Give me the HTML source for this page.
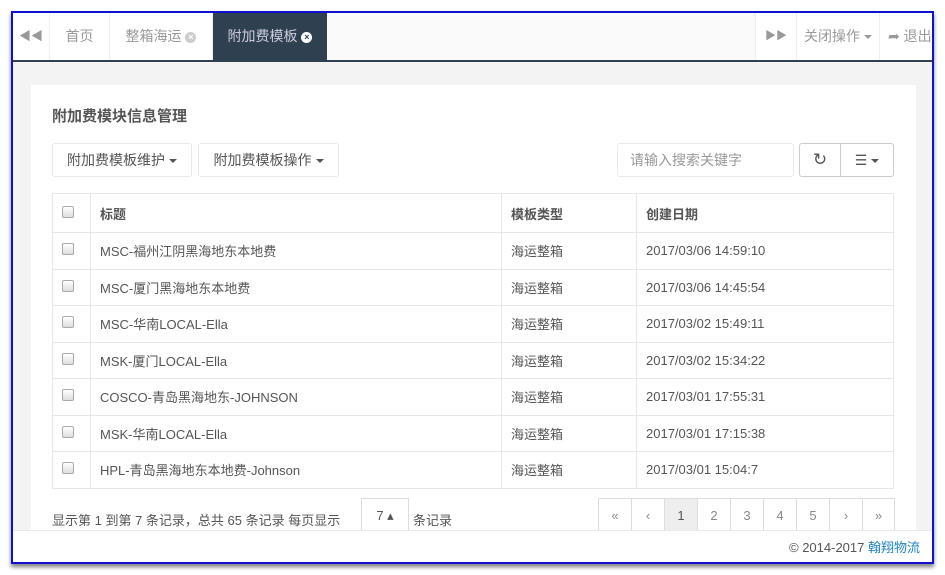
<!DOCTYPE html>
<html><head><meta charset="utf-8"><style>
*{box-sizing:border-box;margin:0;padding:0}
body{width:945px;height:575px;background:#fff;font-family:"Liberation Sans","Noto Sans CJK SC",sans-serif;font-size:13px;color:#676a6c;position:relative;overflow:hidden}
.a{position:absolute}
#frame{left:11px;top:11px;width:923px;height:553px;border:2px solid #1010d0;background:#f3f3f4;box-shadow:0 3px 4px rgba(0,0,0,.5);overflow:hidden}
#bar{left:0;top:0;width:919px;height:49px;background:#fafafa;border-bottom:2px solid #2f4050}
.tab{top:0;height:47px;line-height:47px;text-align:center;border-right:1px solid #eee;background:#fff;color:#999;font-size:14px}
.card{left:18px;top:72px;width:885px;height:460px;background:#fff}
.btn{height:34px;line-height:32px;border:1px solid #e7eaec;border-radius:3px;background:#fff;color:#555;font-size:14px;text-align:center}
.car{display:inline-block;width:0;height:0;border-left:4px solid transparent;border-right:4px solid transparent;border-top:4px solid #555;vertical-align:middle;margin-left:4px}
table{border-collapse:collapse;position:absolute;left:39px;top:180px;width:842px;font-size:13px;color:#555}
td{border:1px solid #e7e7e7;height:36.5px;padding:0 9px}
tr:first-child td{font-weight:bold;height:39px}
.cb{display:inline-block;width:12px;height:12px;border:1px solid #aaa;border-radius:2px;background:linear-gradient(#fff,#ddd)}
.pg{top:485px;height:36px;border:1px solid #ddd;line-height:34px;text-align:center;color:#888;background:#fff;font-size:13px}
.x{display:inline-block;width:11px;height:11px;border-radius:50%;font-size:9px;line-height:11px;text-align:center;vertical-align:middle;font-weight:bold}
</style></head><body>
<div class="a" id="frame">
 <div class="a" id="bar">
  <div class="a tab" style="left:0;width:37px;font-size:12px">◀◀</div>
  <div class="a tab" style="left:37px;width:60px">首页</div>
  <div class="a tab" style="left:97px;width:103px">整箱海运 <span class="x" style="background:#ccc;color:#fff">×</span></div>
  <div class="a tab" style="left:200px;width:114px;background:#2f4050;color:#ccd;border:0">附加费模板 <span class="x" style="background:#fff;color:#2f4050">×</span></div>
  <div class="a tab" style="left:742px;width:42px;border-left:1px solid #eee;font-size:11px">▶▶</div>
  <div class="a tab" style="left:784px;width:83px">关闭操作<span class="car" style="border-top-color:#999"></span></div>
  <div class="a tab" style="left:867px;width:60px;text-align:left;padding-left:8px">➦ 退出</div>
 </div>
 <div class="a card">
  <div class="a" style="left:21px;top:20px;font-size:15px;font-weight:bold;color:#555">附加费模块信息管理</div>
  <div class="a btn" style="left:21px;top:58px;width:140px">附加费模板维护<span class="car"></span></div>
  <div class="a btn" style="left:167px;top:58px;width:141px">附加费模板操作<span class="car"></span></div>
  <div class="a btn" style="left:586px;top:58px;width:177px;text-align:left;padding-left:12px;color:#999">请输入搜索关键字</div>
  <div class="a btn" style="left:768px;top:58px;width:42px;border-color:#ccc;font-size:17px;border-radius:3px 0 0 3px">↻</div>
  <div class="a btn" style="left:809px;top:58px;width:54px;border-color:#ccc;border-radius:0 3px 3px 0">☰<span class="car"></span></div>
 </div>
 <table>
  <tr><td style="width:38px"><span class="cb"></span></td><td style="width:411px">标题</td><td style="width:135px">模板类型</td><td>创建日期</td></tr>
  <tr><td><span class="cb"></span></td><td>MSC-福州江阴黑海地东本地费</td><td>海运整箱</td><td>2017/03/06 14:59:10</td></tr>
  <tr><td><span class="cb"></span></td><td>MSC-厦门黑海地东本地费</td><td>海运整箱</td><td>2017/03/06 14:45:54</td></tr>
  <tr><td><span class="cb"></span></td><td>MSC-华南LOCAL-Ella</td><td>海运整箱</td><td>2017/03/02 15:49:11</td></tr>
  <tr><td><span class="cb"></span></td><td>MSK-厦门LOCAL-Ella</td><td>海运整箱</td><td>2017/03/02 15:34:22</td></tr>
  <tr><td><span class="cb"></span></td><td>COSCO-青岛黑海地东-JOHNSON</td><td>海运整箱</td><td>2017/03/01 17:55:31</td></tr>
  <tr><td><span class="cb"></span></td><td>MSK-华南LOCAL-Ella</td><td>海运整箱</td><td>2017/03/01 17:15:38</td></tr>
  <tr><td><span class="cb"></span></td><td>HPL-青岛黑海地东本地费-Johnson</td><td>海运整箱</td><td>2017/03/01 15:04:7</td></tr>
 </table>
 <div class="a" style="left:39px;top:497px;color:#555">显示第 1 到第 7 条记录，总共 65 条记录 每页显示</div>
 <div class="a pg" style="left:348px;width:48px;color:#555">7 ▴</div>
 <div class="a" style="left:400px;top:497px;color:#555">条记录</div>
 <div class="a pg" style="left:585px;width:34px">«</div>
 <div class="a pg" style="left:618px;width:34px">‹</div>
 <div class="a pg" style="left:651px;width:34px;background:#eee;color:#555">1</div>
 <div class="a pg" style="left:684px;width:34px">2</div>
 <div class="a pg" style="left:717px;width:34px">3</div>
 <div class="a pg" style="left:750px;width:34px">4</div>
 <div class="a pg" style="left:783px;width:34px">5</div>
 <div class="a pg" style="left:816px;width:34px">›</div>
 <div class="a pg" style="left:849px;width:33px">»</div>
 <div class="a" style="left:0;top:517px;width:919px;height:34px;background:#fff;border-top:1px solid #e7eaec;text-align:right;padding-right:12px;line-height:34px;color:#555">© 2014-2017 <span style="color:#1c84c6">翰翔物流</span></div>
</div>
</body></html>
